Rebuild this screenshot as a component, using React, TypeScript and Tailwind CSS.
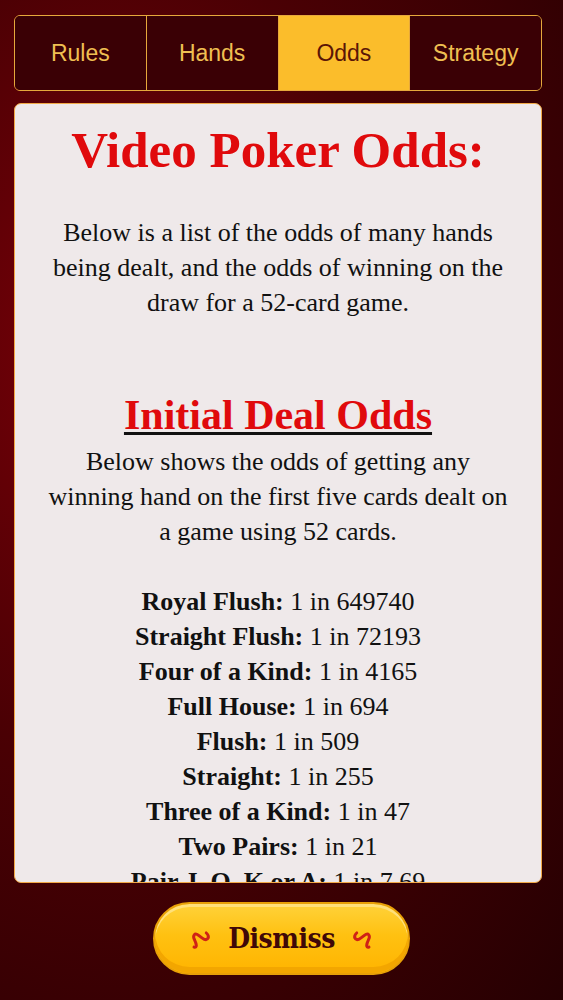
import React from 'react'

const tabs = ['Rules', 'Hands', 'Odds', 'Strategy']

const odds: [string, string][] = [
  ['Royal Flush:', '1 in 649740'],
  ['Straight Flush:', '1 in 72193'],
  ['Four of a Kind:', '1 in 4165'],
  ['Full House:', '1 in 694'],
  ['Flush:', '1 in 509'],
  ['Straight:', '1 in 255'],
  ['Three of a Kind:', '1 in 47'],
  ['Two Pairs:', '1 in 21'],
  ['Pair J, Q, K or A:', '1 in 7.69'],
  ['Pair 10 or lower:', '1 in 2.37'],
]

// little red flourish either side of the button label
function Squiggle({ flip }: { flip?: boolean }) {
  return (
    <svg width="22" height="22" viewBox="0 0 22 22" className={flip ? '-scale-x-100 rotate-[40deg]' : 'rotate-[-40deg]'}>
      <path
        d="M2 14 C4 17 6 13 7 9 C8 4 12 3 13 8 C14 13 15 18 19 16 C20 15 21 13 20.5 11"
        fill="none"
        stroke="#cf2216"
        strokeWidth="3"
        strokeLinecap="round"
      />
    </svg>
  )
}

export default function App() {
  return (
    <div className="flex h-screen w-full flex-col overflow-hidden bg-[radial-gradient(ellipse_at_20%_35%,#7a0008_0%,#4a0004_45%,#260002_100%)] pt-[15px]">
      {/* tabs */}
      <div className="ml-[14px] flex h-[76px] w-[528px] overflow-hidden rounded-[6px] border-[1.5px] border-[#e6a83c] font-['Liberation_Sans',Arial,sans-serif] text-[23px]">
        {tabs.map((t, i) => (
          <div
            key={t}
            className={
              'flex flex-1 items-center justify-center ' +
              (i > 0 ? 'border-l-[1.5px] border-[#e6a83c] ' : '') +
              (t === 'Odds' ? 'bg-[#fbbd2b] text-[#5b1606]' : 'bg-[#3a0005] text-[#efbf52]')
            }
          >
            {t}
          </div>
        ))}
      </div>

      {/* content card */}
      <div className="ml-[14px] mt-[12px] h-[780px] w-[528px] overflow-hidden rounded-[7px] border border-[#f2a947] bg-[#efe9ea] text-center font-['Liberation_Serif','Times_New_Roman',serif] text-[#111]">
        <h1 className="pt-[16px] text-[51px] font-bold leading-[60px] text-[#e00a0c]">Video Poker Odds:</h1>
        <p className="mx-auto mt-[35px] w-[466px] text-[26px] leading-[35px]">
          Below is a list of the odds of many hands being dealt, and the odds of winning on the draw for a 52-card game.
        </p>
        <h2 className="mt-[71px] text-[42px] font-bold leading-[48px] text-[#e00a0c] underline decoration-[#111] decoration-[3px] underline-offset-[3px]">
          Initial Deal Odds
        </h2>
        <p className="mx-auto mt-[5px] w-[466px] text-[26px] leading-[35px]">
          Below shows the odds of getting any winning hand on the first five cards dealt on a game using 52 cards.
        </p>
        <div className="mt-[35px] flex flex-col text-[26px] leading-[35px]">
          {odds.map(([k, v]) => (
            <div key={k}>
              <span className="font-bold">{k}</span> {v}
            </div>
          ))}
        </div>
      </div>

      {/* dismiss */}
      <div className="flex w-full justify-center pt-[19px]">
        <button className="flex h-[73px] w-[257px] items-center justify-center gap-[18px] rounded-full border-[2px] border-[#e8a007] bg-[linear-gradient(#ffd23a_0%,#ffc111_45%,#ffb400_100%)] shadow-[inset_0_-6px_0_#f3a600,inset_0_3px_0_#ffe07a]">
          <Squiggle />
          <span className="font-['DejaVu_Serif',serif] text-[28px] font-bold tracking-[-0.5px] text-[#3f0808] [font-stretch:condensed]">
            Dismiss
          </span>
          <Squiggle flip />
        </button>
      </div>
    </div>
  )
}
